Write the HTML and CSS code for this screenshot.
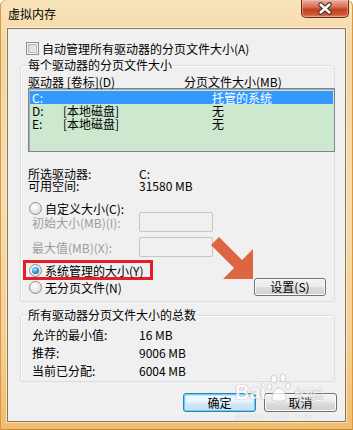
FILE: index.html
```html
<!DOCTYPE html>
<html lang="zh-CN">
<head>
    <meta charset="UTF-8">
    <meta name="viewport" content="width=device-width, initial-scale=1.0">
    <title>虚拟内存</title>
    <link rel="stylesheet" href="styles.css">
</head>
<body>

<div class="window">
    <div class="titlebar">
        <span class="title">虚拟内存</span>
        <div class="close-btn">
            <svg width="48" height="18" viewBox="0 0 48 18">
                <path d="M19.5 4.5 L28.5 12.5 M28.5 4.5 L19.5 12.5" stroke="#3a3030" stroke-width="4.6" stroke-linecap="round"/>
                <path d="M19.5 4.5 L28.5 12.5 M28.5 4.5 L19.5 12.5" stroke="#ffffff" stroke-width="2.4" stroke-linecap="round"/>
            </svg>
        </div>
    </div>

    <div class="client">
        <div class="check-row"><span class="checkbox"></span>自动管理所有驱动器的分页文件大小(A)</div>

        <fieldset class="group group-drives">
            <legend>每个驱动器的分页文件大小</legend>
            <div class="list-head">
                <span class="col-drive">驱动器 [卷标](D)</span>
                <span>分页文件大小(MB)</span>
            </div>
            <ul class="drive-list">
                <li class="selected"><span class="col-letter">C:</span><span class="col-label"></span><span>托管的系统</span></li>
                <li><span class="col-letter">D:</span><span class="col-label">[本地磁盘]</span><span>无</span></li>
                <li><span class="col-letter">E:</span><span class="col-label">[本地磁盘]</span><span>无</span></li>
            </ul>

            <div class="info">
                <div class="info-row"><span class="info-label">所选驱动器:</span><span>C:</span></div>
                <div class="info-row"><span class="info-label">可用空间:</span><span>31580 MB</span></div>
            </div>

            <div class="radio-row radio-custom"><span class="radio"></span>自定义大小(C):</div>
            <div class="field-row field-first"><span class="field-label">初始大小(MB)(I):</span><span class="textbox"></span></div>
            <div class="field-row field-second"><span class="field-label">最大值(MB)(X):</span><span class="textbox"></span></div>

            <div class="choice-row">
                <div class="choice-col">
                    <div class="highlight">
                        <div class="radio-row"><span class="radio checked"></span>系统管理的大小(Y)</div>
                    </div>
                    <div class="radio-row"><span class="radio"></span>无分页文件(N)</div>
                </div>
                <button class="btn btn-set">设置(S)</button>
            </div>
        </fieldset>

        <fieldset class="group group-total">
            <legend>所有驱动器分页文件大小的总数</legend>
            <div class="total-row"><span class="field-label">允许的最小值:</span><span>16 MB</span></div>
            <div class="total-row"><span class="field-label">推荐:</span><span>9006 MB</span></div>
            <div class="total-row"><span class="field-label">当前已分配:</span><span>6004 MB</span></div>
        </fieldset>

        <div class="dialog-buttons">
            <button class="btn btn-default">确定</button>
            <button class="btn">取消</button>
        </div>
    </div>

    <svg class="arrow" width="46" height="46" viewBox="0 0 46 46">
        <polygon points="10,2 33,25 44,14 44,44 14,44 25,33 2,10" fill="#dd6542"/>
    </svg>

    <div class="watermark">
        <div class="wm-logo">
            <span class="wm-bai">Bai</span>
            <svg class="wm-paw" width="24" height="30" viewBox="0 0 24 30">
                <ellipse cx="7" cy="6" rx="3" ry="4" fill="#fff" stroke="#bbb" stroke-width="0.8"/>
                <ellipse cx="16" cy="5" rx="3" ry="4" fill="#fff" stroke="#bbb" stroke-width="0.8"/>
                <ellipse cx="2.5" cy="14" rx="2.4" ry="3.2" fill="#fff" stroke="#bbb" stroke-width="0.8"/>
                <ellipse cx="21" cy="13" rx="2.4" ry="3.2" fill="#fff" stroke="#bbb" stroke-width="0.8"/>
                <path d="M5 26 C5 19 9 15 12 15 C15 15 19 19 19 26 C19 29 5 29 5 26 Z" fill="#fff" stroke="#bbb" stroke-width="0.8"/>
            </svg>
            <span class="wm-jy">经验</span>
        </div>
        <div class="wm-url">jingyan.baidu.com</div>
    </div>
</div>

</body>
</html>
```

FILE: styles.css
```css
html, body { margin: 0; padding: 0; }
body { font-family: "Noto Sans CJK SC", "Noto Sans", sans-serif; font-size: 12px; color: #000; }

.window { position: relative; width: 353px; height: 430px; box-sizing: border-box; padding: 0 7px 8px 7px; overflow: hidden;
    background: linear-gradient(180deg, #f8e4bb 0%, #f3d6a0 12%, #f6ddae 45%, #f4cf92 80%, #f1bd6c 100%);
    box-shadow: inset 1px 0 0 #d89a48, inset -1px 0 0 #d89a48, inset 0 -1px 0 #c78a3a; border-radius: 6px 6px 0 0; }

.titlebar { display: flex; justify-content: space-between; align-items: flex-start; height: 28px; margin: 0 -7px; padding: 0 4px 0 8px; }
.title { line-height: 28px; color: #000; }
.close-btn { width: 48px; height: 18px; box-sizing: border-box; border: 1px solid #6b2a1c; border-top: none; border-radius: 0 0 5px 5px;
    background: linear-gradient(180deg, #eab0a2 0%, #d9715a 40%, #c4401f 55%, #cf5636 85%, #e0886a 100%);
    box-shadow: inset 0 0 0 1px rgba(255, 200, 180, 0.45); display: flex; align-items: center; justify-content: center; }
.close-btn svg { display: block; margin: -1px; }

.client { height: 394px; box-sizing: border-box; background: #f0f0f0; border: 1px solid #8c7556; box-shadow: 0 0 0 1px rgba(255, 243, 220, 0.7); }

.check-row { display: flex; align-items: center; height: 14px; margin-top: 12px; padding-left: 18px; }
.checkbox { width: 13px; height: 13px; box-sizing: border-box; margin-right: 3px; border: 1px solid #8e8f8f;
    background: linear-gradient(135deg, #cfd0d1, #f7f7f7); box-shadow: inset 0 0 0 1px #f4f4f4, inset 0 0 0 2px #b6b9bd; }

.group { margin: 0 10px 0 12px; padding: 0; border: 1px solid #d5dfe5; border-radius: 3px; box-shadow: inset 1px 1px 0 #fff; min-width: 0; }
.group legend { margin-left: 6px; padding: 0 1px; line-height: 14px; }
.group-drives { margin-top: 3px; padding-bottom: 7px; }
.group-total { margin-top: 6px; padding-bottom: 1px; }

.list-head { display: flex; margin-top: 3px; padding-left: 7px; line-height: 13px; }
.col-drive { width: 156px; }

.drive-list { list-style-type: none; margin: 0 -1px 0 7px; padding: 2px 1px; height: 64px; box-sizing: border-box;
    background: #cce8cf; border: 1px solid #7f838a; box-shadow: inset 1px 1px 0 #a9acb0; }
.drive-list li { display: flex; height: 13px; line-height: 13px; padding-left: 2px; }
.drive-list li.selected { background: #3399ff; color: #fff; }
.col-letter { width: 31px; }
.col-label { width: 149px; }

.info { margin-top: 16px; padding-left: 7px; }
.info-row { display: flex; line-height: 12px; }
.info-label { width: 111px; }

.radio-row { display: flex; align-items: center; height: 14px; padding-left: 8px; }
.radio-custom { margin-top: 9px; }
.radio { position: relative; width: 13px; height: 13px; box-sizing: border-box; margin-right: 3px; border-radius: 50%; border: 1px solid #8e8f8f;
    background: radial-gradient(circle at 40% 35%, #ffffff 0%, #e6e6e6 55%, #c9c9c9 100%); }
.radio.checked::after { content: ""; position: absolute; left: 2px; top: 2px; width: 7px; height: 7px; border-radius: 50%;
    background: radial-gradient(circle at 40% 35%, #b9ecff 0%, #3a9be0 45%, #104f8f 100%); }

.field-row { display: flex; align-items: center; height: 20px; padding-left: 11px; color: #9d9d9d; }
.field-first { margin-top: -3px; }
.field-second { margin-top: 5px; }
.field-label { width: 107px; }
.textbox { width: 74px; height: 20px; box-sizing: border-box; border: 1px solid #c6c6c6; border-radius: 2px; background: #f0f0f0; }

.choice-row { display: flex; margin-top: 3px; }
.choice-col { display: flex; flex-direction: column; }
.highlight { width: 130px; height: 20px; box-sizing: border-box; margin-left: 2px; border: 3px solid #e61e27; padding-left: 3px; }
.highlight .radio-row { padding-left: 0; }

.btn { font-family: inherit; font-size: 12px; color: #000; padding: 0; cursor: pointer; box-sizing: border-box;
    border: 1px solid #707070; border-radius: 3px; box-shadow: inset 0 0 0 1px #fbfbfb;
    background: linear-gradient(180deg, #f2f2f2 0%, #ebebeb 48%, #dddddd 52%, #cfcfcf 100%); }
.btn-set { align-self: flex-end; width: 72px; height: 18px; line-height: 16px; margin: 0 8px -2px auto; }

.total-row { display: flex; line-height: 18px; padding-left: 11px; }
.group-total .total-row:first-of-type { margin-top: 4px; }

.dialog-buttons { display: flex; justify-content: flex-end; gap: 8px; margin-top: 11px; padding-right: 8px; }
.dialog-buttons .btn { width: 73px; height: 19px; line-height: 17px; }
.btn-default { border-color: #3c7fb1; box-shadow: inset 0 0 0 1px #5fd0fb, inset 0 0 0 2px #bfeafc;
    background: linear-gradient(180deg, #f4fafd 0%, #e8f4fb 48%, #d6e9f5 52%, #c4dcee 100%); }

.arrow { position: absolute; left: 209px; top: 235px; }

.watermark { position: absolute; left: 235px; top: 372px; opacity: 0.75; pointer-events: none; }
.wm-logo { display: flex; align-items: flex-end; height: 31px; }
.wm-bai { font-family: "Liberation Sans", Arial, sans-serif; font-weight: bold; font-size: 20px; line-height: 20px; color: #fff;
    text-shadow: 0 0 1px #999, 0 0 1px #999; margin-bottom: 1px; }
.wm-paw { display: block; margin: 0 1px; }
.wm-jy { font-size: 15px; line-height: 16px; color: #fff; text-shadow: 0 0 1px #999, 0 0 1px #999; margin-left: 2px; margin-bottom: 1px; }
.wm-url { font-family: "Liberation Sans", Arial, sans-serif; font-size: 9px; line-height: 10px; color: #fff; text-shadow: 0 0 1px #aaa; margin-top: 8px; letter-spacing: 0.3px; }
```
